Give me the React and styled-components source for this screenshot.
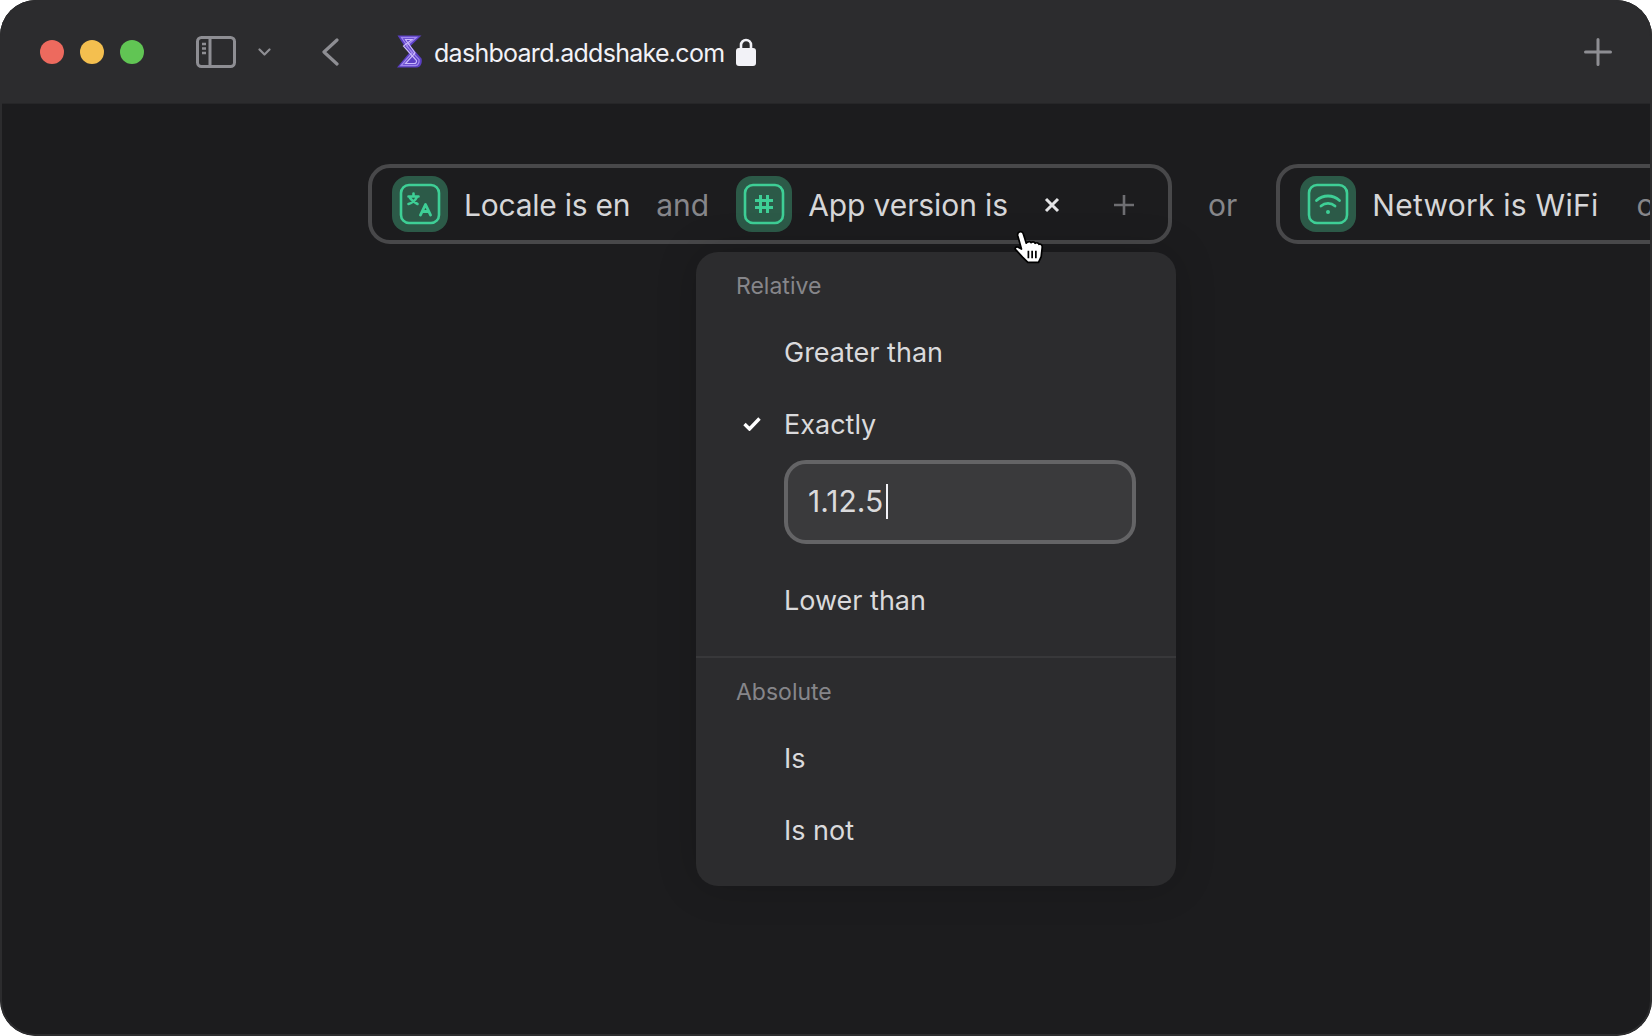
import React from 'react'
import styled, { createGlobalStyle } from 'styled-components'

const GlobalStyle = createGlobalStyle`
  html, body {
    margin: 0;
    background: #ffffff;
  }
  body {
    font-family: Inter, "Liberation Sans", sans-serif;
  }
`

const BrowserWindow = styled.div`
  position: relative;
  width: 1652px;
  height: 1036px;
  border-radius: 36px;
  overflow: hidden;
  background: #1c1c1e;
  display: flex;
  flex-direction: column;

  &::after {
    content: '';
    position: absolute;
    inset: 0;
    border-radius: 36px;
    box-shadow: inset 0 0 0 2px #2c2c2e;
    pointer-events: none;
  }
`

const Toolbar = styled.header`
  height: 104px;
  flex: none;
  box-sizing: border-box;
  background: #2c2c2e;
  border-bottom: 1px solid #262628;
  display: flex;
  align-items: center;
  padding: 0 40px;
`

const Lights = styled.div`
  display: flex;
  gap: 16px;
  margin-right: 52px;
`

const Light = styled.span`
  width: 24px;
  height: 24px;
  border-radius: 50%;
  background: ${(p) => p.$color};
`

const ToolIcon = styled.svg`
  flex: none;
  display: block;
  margin-left: ${(p) => p.$left || 0}px;
`

const Url = styled.span`
  margin-left: 12px;
  padding-top: 2px;
  font-size: 25px;
  letter-spacing: -0.72px;
  color: #f2f2f7;
  white-space: nowrap;
`

const Spacer = styled.div`
  flex: 1;
`

const Content = styled.main`
  flex: 1;
  position: relative;
  padding-top: 60px;
`

const FilterRow = styled.div`
  display: flex;
  align-items: center;
  padding-left: 368px;
  white-space: nowrap;
`

const Chip = styled.div`
  flex: none;
  box-sizing: border-box;
  height: 80px;
  width: ${(p) => p.$width}px;
  border: 4px solid #48484a;
  border-radius: 22px;
  display: flex;
  align-items: center;
  padding-left: 20px;
`

const IconTile = styled.div`
  flex: none;
  width: 56px;
  height: 56px;
  border-radius: 16px;
  background: #2c5a48;
  display: flex;
  align-items: center;
  justify-content: center;
  margin-right: 16px;
`

const ChipText = styled.span`
  padding-top: 2px;
  font-size: 30px;
  letter-spacing: ${(p) => p.$spacing}px;
  color: #d6d6d8;
`

const Joiner = styled.span`
  flex: none;
  padding-top: 2px;
  font-size: 30px;
  color: #86868a;
  margin: 0 ${(p) => p.$right}px 0 ${(p) => p.$left}px;
`

const ChipButton = styled.span`
  flex: none;
  display: flex;
  padding-top: 2px;
  margin-left: ${(p) => p.$left}px;
`

const Menu = styled.div`
  position: absolute;
  left: 696px;
  top: 148px;
  width: 480px;
  height: 634px;
  box-sizing: border-box;
  border-radius: 22px;
  background: #2c2c2e;
  box-shadow: 0 0 40px rgba(0, 0, 0, 0.18);
  padding-top: 16px;
`

const Section = styled.section`
  padding-bottom: ${(p) => p.$bottom || 0}px;
  & + & {
    border-top: 2px solid #38383a;
    padding-top: 16px;
  }
`

const SectionLabel = styled.div`
  height: 36px;
  line-height: 36px;
  padding-left: 40px;
  font-size: 23px;
  color: #86868a;
  margin-bottom: ${(p) => p.$gap}px;
`

const Option = styled.div`
  height: 72px;
  display: flex;
  align-items: center;
  padding-left: 40px;
  font-size: 27px;
  color: #dadadc;
`

const CheckSlot = styled.span`
  flex: none;
  width: 48px;
  display: flex;
  padding-left: 7px;
  box-sizing: border-box;
`

const InputBox = styled.div`
  box-sizing: border-box;
  width: 352px;
  height: 84px;
  margin: 0 0 20px 88px;
  border: 4px solid #646466;
  border-radius: 22px;
  background: #3a3a3c;
  display: flex;
  align-items: center;
  padding: 0 0 2px 20px;
  font-size: 30px;
  color: #dadadc;
`

const Caret = styled.span`
  width: 2px;
  height: 35px;
  margin-left: 3px;
  background: #f2f2f7;
`

const Pointer = styled.svg`
  position: absolute;
  left: 1014px;
  top: 126px;
`

const SidebarIcon = () => (
  <ToolIcon width="40" height="32" viewBox="0 0 40 32" fill="none" stroke="#8e8e93">
    <rect x="1.5" y="1.5" width="37" height="29" rx="4" strokeWidth="3" />
    <path d="M14 2v28" strokeWidth="3" />
    <path d="M6 8h4M6 12.5h4M6 17h4" strokeWidth="2.4" />
  </ToolIcon>
)

const Logo = () => (
  <ToolIcon $left={57} width="26" height="33" viewBox="0 0 26 33" fill="none">
    <path d="M1.500 0.500H25.500L14.500 11 25.500 23.500C26.500 27 25 32.500 21 32.500H1L13 18Z" fill="#5b3fc4" />
    <path d="M5.500 2.500H20.500L10.500 11 23 24.500C23.500 27.500 22 30.500 19.500 30.500H5L16 18Z" stroke="#9f86ee" strokeWidth="1.3" />
    <path d="M9.500 4.500H16L7.500 11 20.500 25.500C20.800 27 20 28.500 18 28.500H9.500L19 18Z" stroke="#c9b8fb" strokeWidth="1.2" />
  </ToolIcon>
)

const TileFrame = ({ children }) => (
  <svg width="42" height="42" viewBox="0 0 42 42" fill="none" stroke="#3ecf96" strokeWidth="2.6" strokeLinecap="round" strokeLinejoin="round">
    <rect x="2" y="2" width="38" height="38" rx="8" />
    {children}
  </svg>
)

const TranslateIcon = () => (
  <TileFrame>
    <path d="M9.500 13.500h10M14.500 10.500v3M18 14c-1.500 3-4.500 6-8.500 7M11 15c1.500 2.200 4 4.500 7.500 6" strokeWidth="2.6" />
    <path d="M21.500 32l5-10.500 5 10.500M23.500 28.500h6" strokeWidth="2.9" />
  </TileFrame>
)

const HashIcon = () => (
  <TileFrame>
    <path d="M17.500 12v18M24.500 12v18M12 17.500h18M12 24.500h18" strokeWidth="3" strokeLinecap="butt" />
  </TileFrame>
)

const WifiIcon = () => (
  <TileFrame>
    <path d="M9.500 17.500c6.500-6 16.500-6 23 0M14 23c4-3.500 10-3.500 14 0" strokeWidth="2.800" />
    <circle cx="21" cy="29" r="2" fill="#3ecf96" stroke="none" />
  </TileFrame>
)

const Filter = ({ icon, spacing = -0.1, children }) => (
  <>
    <IconTile>{icon}</IconTile>
    <ChipText $spacing={spacing}>{children}</ChipText>
  </>
)

const App = () => {
  return (
    <>
      <GlobalStyle />
      <BrowserWindow>
        <Toolbar>
          <Lights>
            <Light $color="#ed6a5e" />
            <Light $color="#f4bf4f" />
            <Light $color="#61c554" />
          </Lights>
          <SidebarIcon />
          <ToolIcon $left={22} width="13" height="8" viewBox="0 0 13 8" fill="none" stroke="#8e8e93" strokeWidth="2.2" strokeLinecap="round" strokeLinejoin="round">
            <path d="M1.500 1.500 6.500 6.500 11.500 1.500" />
          </ToolIcon>
          <ToolIcon $left={51} width="17" height="28" viewBox="0 0 17 28" fill="none" stroke="#8e8e93" strokeWidth="3.2" strokeLinecap="round" strokeLinejoin="round">
            <path d="M15 2 2 14 15 26" />
          </ToolIcon>
          <Logo />
          <Url>dashboard.addshake.com</Url>
          <ToolIcon $left={12} width="20" height="28" viewBox="0 0 20 28">
            <path d="M5 11V7a5 5 0 0 1 10 0v4" fill="none" stroke="#f2f2f7" strokeWidth="2.600" />
            <rect x="0" y="10" width="20" height="18" rx="3" fill="#f2f2f7" />
          </ToolIcon>
          <Spacer />
          <ToolIcon width="28" height="28" viewBox="0 0 28 28" stroke="#8e8e93" strokeWidth="3" strokeLinecap="round">
            <path d="M14 1.500v25M1.500 14h25" />
          </ToolIcon>
        </Toolbar>
        <Content>
          <FilterRow>
            <Chip $width={804}>
              <Filter icon={<TranslateIcon />} spacing={-0.25}>Locale is en</Filter>
              <Joiner $left={26} $right={27}>and</Joiner>
              <Filter icon={<HashIcon />}>App version is</Filter>
              <ChipButton $left={36}>
                <svg width="16" height="16" viewBox="0 0 16 16" stroke="#e4e4e6" strokeWidth="3">
                  <path d="M2 2l12 12M14 2 2 14" />
                </svg>
              </ChipButton>
              <ChipButton $left={54}>
                <svg width="20" height="20" viewBox="0 0 20 20" stroke="#6e6e72" strokeWidth="2.6">
                  <path d="M10 0v20M0 10h20" />
                </svg>
              </ChipButton>
            </Chip>
            <Joiner $left={36} $right={39}>or</Joiner>
            <Chip $width={500}>
              <Filter icon={<WifiIcon />} spacing={0.25}>Network is WiFi</Filter>
              <Joiner $left={38} $right={0}>or</Joiner>
            </Chip>
          </FilterRow>

          <Menu>
            <Section $bottom={20}>
              <SectionLabel $gap={12}>Relative</SectionLabel>
              <Option><CheckSlot />Greater than</Option>
              <Option>
                <CheckSlot>
                  <svg width="18" height="14" viewBox="0 0 18 14" fill="none" stroke="#ffffff" strokeWidth="3.4">
                    <path d="M1.500 7 6.500 12 16.500 1.500" />
                  </svg>
                </CheckSlot>
                Exactly
              </Option>
              <InputBox>1.12.5<Caret /></InputBox>
              <Option><CheckSlot />Lower than</Option>
            </Section>
            <Section>
              <SectionLabel $gap={12}>Absolute</SectionLabel>
              <Option><CheckSlot />Is</Option>
              <Option><CheckSlot />Is not</Option>
            </Section>
          </Menu>

          <Pointer width="32" height="35" viewBox="0 0 30 32">
            <path
              d="M5 1.500C7 0.500 8.500 2 9 4l2.500 8 1-1c1.500-1 3-.5 3.500.5 1-1 3-1 3.800.5 1.200-.8 3-.5 3.700 1 1.500-.5 3 .5 3 2.500l-1 9-2.500 5.500H13l-5-5-6.500-7C.5 17 1.500 15 3.500 15.500L7 17.500 3.500 5C3.200 3.500 3.800 2 5 1.500Z"
              fill="#ffffff"
              stroke="#000000"
              strokeWidth="1.600"
              strokeLinejoin="round"
            />
            <path d="M13.500 19v7M17 19v7M20.500 19v7" stroke="#000000" strokeWidth="1.600" />
          </Pointer>
        </Content>
      </BrowserWindow>
    </>
  )
}

export default App
